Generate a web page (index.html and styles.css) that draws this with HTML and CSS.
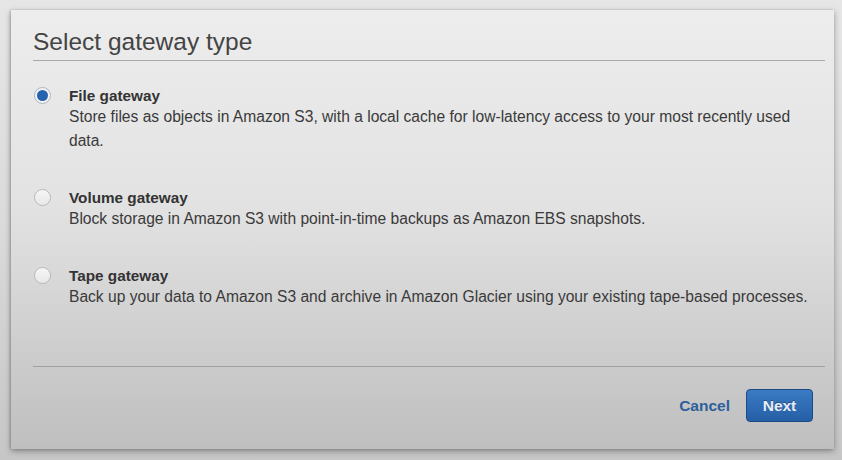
FILE: index.html
```html
<!DOCTYPE html>
<html>
<head>
<meta charset="utf-8">
<link rel="stylesheet" href="styles.css">
</head>
<body>
<div class="panel">
  <h1 class="title">Select gateway type</h1>
  <div class="options">
    <div class="option">
      <span class="radio checked"><span class="dot"></span></span>
      <div class="text">
        <div class="label">File gateway</div>
        <div class="desc">Store files as objects in Amazon S3, with a local cache for low-latency access to your most recently used data.</div>
      </div>
    </div>
    <div class="option">
      <span class="radio"></span>
      <div class="text">
        <div class="label">Volume gateway</div>
        <div class="desc">Block storage in Amazon S3 with point-in-time backups as Amazon EBS snapshots.</div>
      </div>
    </div>
    <div class="option">
      <span class="radio"></span>
      <div class="text">
        <div class="label">Tape gateway</div>
        <div class="desc">Back up your data to Amazon S3 and archive in Amazon Glacier using your existing tape-based processes.</div>
      </div>
    </div>
  </div>
  <div class="footer">
    <span class="cancel">Cancel</span>
    <span class="next">Next</span>
  </div>
</div>
</body>
</html>
```

FILE: styles.css
```css
html, body {
  margin: 0;
  padding: 0;
}
body {
  width: 842px;
  height: 460px;
  overflow: hidden;
  background: linear-gradient(to bottom, #e6e6e6 0%, #dadada 50%, #c6c6c6 100%);
  font-family: "Liberation Sans", Arial, Helvetica, sans-serif;
  padding-top: 10px;
  box-sizing: border-box;
}
.panel {
  margin-left: 11px;
  width: 823px;
  box-sizing: border-box;
  padding: 0 9px 0 22px;
  background: linear-gradient(to bottom, #ededed 0%, #e2e2e2 45%, #bfbfbf 100%);
  box-shadow: 0 2px 6px rgba(0, 0, 0, 0.35), -1px 0 2px rgba(0, 0, 0, 0.15);
}
.title {
  margin: 0;
  padding: 18px 0 4px 0;
  font-size: 24.5px;
  line-height: 28px;
  font-weight: normal;
  color: #444;
  border-bottom: 1px solid #a8a8a8;
}
.options {
  padding-top: 25px;
  display: flex;
  flex-direction: column;
  gap: 35px;
}
.option {
  display: flex;
  align-items: flex-start;
  gap: 18px;
}
.radio {
  flex: none;
  width: 15px;
  height: 15px;
  margin-top: 1px;
  margin-left: 1px;
  border: 1px solid #b9b9b9;
  border-radius: 50%;
  background: linear-gradient(to bottom, #f6f6f6, #e8e8e8);
  display: flex;
  align-items: center;
  justify-content: center;
}
.radio.checked {
  border-color: #a9b4c2;
  background: #f4f4f4;
}
.dot {
  width: 11px;
  height: 11px;
  border-radius: 50%;
  background: #2563b0;
}
.text {
  color: #333;
  font-size: 15.6px;
}
.label {
  font-weight: bold;
  font-size: 15.3px;
  line-height: 20px;
  color: #333;
}
.desc {
  margin-top: -1px;
  max-width: 745px;
  line-height: 24px;
  color: #3a3a3a;
}
.footer {
  margin-top: 57px;
  border-top: 1px solid #a0a0a0;
  padding: 22px 12px 27px 0;
  display: flex;
  justify-content: flex-end;
  align-items: center;
  gap: 16px;
}
.cancel {
  font-size: 15.5px;
  font-weight: bold;
  color: #2c5f9c;
}
.next {
  box-sizing: border-box;
  width: 67px;
  height: 33px;
  display: flex;
  align-items: center;
  justify-content: center;
  font-size: 15.5px;
  font-weight: bold;
  color: #e8eef6;
  text-shadow: 0 -1px 0 rgba(0, 0, 0, 0.3);
  background: linear-gradient(to bottom, #3a7bc4, #255fa6);
  border: 1px solid #1c4a85;
  border-radius: 4px;
}
```
